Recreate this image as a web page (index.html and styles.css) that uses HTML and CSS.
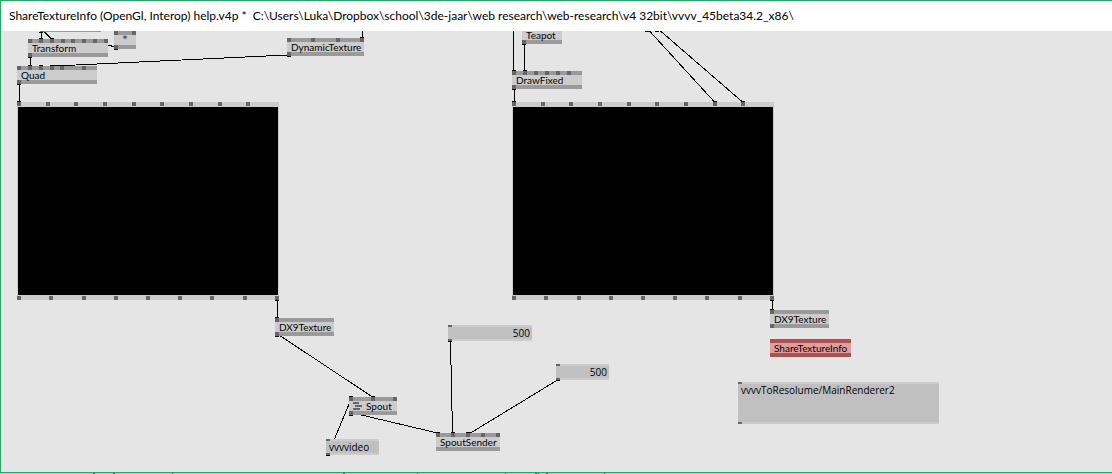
FILE: index.html
```
<!DOCTYPE html>
<html lang="en">
<head>
<meta charset="utf-8">
<title>ShareTextureInfo (OpenGl, Interop) help.v4p</title>
<link rel="stylesheet" href="styles.css">
</head>
<body>
<div class="window">
  <header class="titlebar">
    <h1 class="title">ShareTextureInfo (OpenGl, Interop) help.v4p *&nbsp; C:\Users\Luka\Dropbox\school\3de-jaar\web research\web-research\v4 32bit\vvvv_45beta34.2_x86\</h1>
  </header>
  <main class="patch" id="patch"></main>
</div>
<svg class="edge" height="1" aria-hidden="true"><path d="M93 0h2M113 0h2M172 0h1M343 0h2M417 0h1M505 0h1M535 0h2M538 0h1M546 0h2M604 0h1"/></svg>
<script src="patch.js"></script>
</body>
</html>
```
FILE: styles.css
```
* { box-sizing: border-box; }

body {
  margin: 0;
  min-height: 100vh;
  display: flex;
  flex-direction: column;
  background: #bccfc5;
  color: #000;
  font-family: Lato, "Liberation Sans", Arial, sans-serif;
}

.window {
  flex: 1;
  display: flex;
  flex-direction: column;
  border: 1px solid #1aae66;
  border-right: 0;
  background: #e5e5e5;
}

.titlebar {
  display: flex;
  align-items: center;
  height: 30px;
  padding: 0 8px;
  background: #fff;
}

.title {
  margin: 0;
  font-weight: 400;
  font-size: 12px;
  line-height: 16px;
  white-space: nowrap;
}

.patch {
  position: relative;
  flex: 1;
  overflow: hidden;
}

.links {
  position: absolute;
  left: 0;
  top: 0;
  width: 100%;
  height: 100%;
  fill: none;
  stroke: #000;
  shape-rendering: crispEdges;
}

.links .caps { stroke: none; fill: #000; }

.node {
  position: absolute;
  display: flex;
  height: 18px;
  padding: 1px 4px 0;
  border: solid #9a9a9a;
  border-width: 4px 0;
  background: #ccc;
  font-size: 10px;
  line-height: 8px;
  white-space: nowrap;
}

.node.error { border-color: #a95252; background: #e59c9c; }
.node.operator { justify-content: center; font-size: 14px; color: #124b78; }

.layers { margin-right: 4px; fill: #666; }

.renderer {
  position: absolute;
  width: 262px;
  height: 198px;
  border: solid #ccc;
  border-width: 5px 1px;
  background: #000;
}

.iobox {
  position: absolute;
  border: solid #ccc;
  border-width: 2px 0;
  background: #c0c0c0;
}

.value {
  display: block;
  width: 100%;
  height: 100%;
  margin: 0;
  padding: 0 2px 0 3px;
  border: 0;
  background: none;
  color: #000;
  font: 10px/12px "Open Sans", "Noto Sans", sans-serif;
  resize: none;
  overflow: hidden;
}

.value.number { text-align: right; }

.pin {
  position: absolute;
  width: 4px;
  height: 4px;
  background: #666;
}

.pin.in { top: -4px; }
.pin.out { bottom: -4px; }
.renderer .pin.in { top: -5px; }
.renderer .pin.out { bottom: -5px; }
.renderer .pin { margin-left: -1px; }
.iobox .pin { height: 2px; }
.iobox .pin.in { top: -2px; }
.iobox .pin.out { bottom: -2px; }

.edge {
  display: block;
  width: 100%;
  stroke: #3c5f58;
  stroke-width: 2;
}
```
FILE: patch.js
```
const topPins = [0, 29, 57, 86, 115, 143, 172, 201, 229];
const bottomPins = [0, 32, 65, 97, 129, 161, 193, 226, 258];

const items = [
  { kind: "node", x: 39, y: -17, w: 61, ins: [], outs: [0] },
  { kind: "node", x: 27, y: 8, w: 80, label: "Transform", ins: [0, 11, 22, 33, 43, 54, 65, 76], outs: [0] },
  { kind: "node operator", x: 113, y: 0, w: 22, label: "*", ins: [0, 18], outs: [0] },
  { kind: "node", x: 16, y: 35, w: 80, label: "Quad", ins: [0, 11, 22, 33, 43, 65], outs: [0] },
  { kind: "node", x: 286, y: 7, w: 77, label: "DynamicTexture", ins: [0, 24, 49, 73], outs: [0] },
  { kind: "node", x: 521, y: -5, w: 40, label: "Teapot", ins: [], outs: [0] },
  { kind: "node", x: 511, y: 40, w: 70, label: "DrawFixed", ins: [0, 11, 22, 33, 44, 55], outs: [0] },
  { kind: "renderer", x: 16, y: 71, ins: topPins, outs: bottomPins },
  { kind: "renderer", x: 511, y: 71, ins: topPins, outs: bottomPins },
  { kind: "node", x: 274, y: 287, w: 59, label: "DX9Texture", ins: [0], outs: [0] },
  { kind: "node", x: 769, y: 279, w: 59, label: "DX9Texture", ins: [0], outs: [0] },
  { kind: "node error", x: 769, y: 308, w: 81, label: "ShareTextureInfo", ins: [], outs: [] },
  { kind: "node", x: 348, y: 366, w: 48, label: "Spout", icon: true, ins: [0, 22, 44], outs: [0] },
  { kind: "node", x: 435, y: 402, w: 64, label: "SpoutSender", ins: [0, 15, 30, 45, 60], outs: [] },
  { kind: "iobox", x: 447, y: 294, w: 84, h: 16, value: "500", number: true, name: "Width", ins: [0], outs: [0] },
  { kind: "iobox", x: 555, y: 333, w: 53, h: 16, value: "500", number: true, name: "Height", ins: [0], outs: [0] },
  { kind: "iobox", x: 325, y: 408, w: 53, h: 16, value: "vvvvideo", name: "Sender name", ins: [0], outs: [0] },
  { kind: "iobox", x: 737, y: 351, w: 201, h: 42, value: "vvvvToResolume/MainRenderer2", area: true, name: "Share name", ins: [0], outs: [0] }
];

/* lines from an output to an input */
const links = [
  [40, 1, 40, 8], [43, 1, 49, 7], [29, 26, 29, 35], [18, 53, 18, 71],
  [107, 14, 113, 16], [286, 24, 53, 35], [361, 0, 361, 7],
  [512, 0, 512, 40], [523, 13, 523, 40], [513, 58, 513, 71],
  [648, 0, 713, 71], [659, 0, 741, 71],
  [276, 269, 276, 287], [771, 269, 771, 279],
  [279, 305, 371, 366], [348, 372, 333, 408], [360, 384, 436, 402],
  [449, 310, 451, 402], [556, 349, 469, 402]
];

/* short marks where a link touches a pin */
const caps = [
  [38, 1], [38, 7], [49, 7], [27, 26], [27, 34], [38, 34], [49, 34], [16, 53], [16, 70],
  [113, 18], [286, 25], [359, 6], [511, 39], [521, 13], [522, 39], [511, 58], [511, 70],
  [644, 0], [654, 0], [712, 70], [740, 70], [274, 269], [274, 286], [769, 269], [769, 278],
  [274, 305], [348, 365], [370, 365], [348, 384], [435, 401], [450, 401], [465, 401],
  [447, 310], [555, 349], [325, 424]
];

const pins = (list, side) => list.map(x => `<span class="pin ${side}" style="left:${x}px"></span>`).join("");
const layers = '<svg class="layers" width="9" height="8" aria-hidden="true"><path d="M0 0h6v2H0zM2 3h7v2H2zM0 6h7v2H0z"/></svg>';

function draw(item) {
  let body = (item.icon ? layers : "") + (item.label ? `<span>${item.label}</span>` : "");
  if (item.area) body = `<textarea class="value" spellcheck="false" aria-label="${item.name}">${item.value}</textarea>`;
  else if (item.value) body = `<input class="value${item.number ? " number" : ""}" type="text" aria-label="${item.name}" value="${item.value}">`;
  const size = (item.w ? `width:${item.w}px;` : "") + (item.h ? `height:${item.h}px;` : "");
  return `<div class="${item.kind}" style="left:${item.x}px;top:${item.y}px;${size}">${body}${pins(item.ins, "in")}${pins(item.outs, "out")}</div>`;
}

const lines = links.map(([a, b, c, d]) => `<line x1="${a + 0.5}" y1="${b}" x2="${c + 0.5}" y2="${d}"/>`).join("");
const marks = caps.map(([x, y]) => `<rect x="${x}" y="${y}" width="4" height="1"/>`).join("");

document.getElementById("patch").innerHTML =
  `<svg class="links" aria-hidden="true">${lines}<g class="caps">${marks}</g></svg>` + items.map(draw).join("");
```
